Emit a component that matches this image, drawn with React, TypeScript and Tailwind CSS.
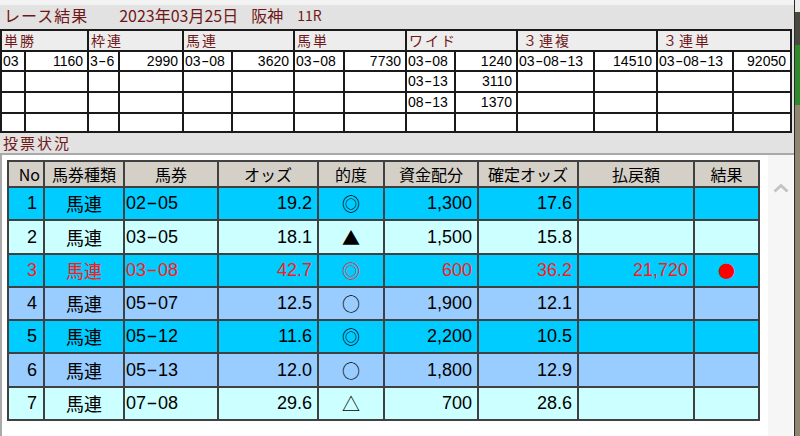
import React from 'react';

// 上段：レース結果（払戻）テーブル
const topHeaders = ['単勝', '枠連', '馬連', '馬単', 'ワイド', '３連複', '３連単'];

const topRows: string[][] = [
  ['03', '1160', '3-6', '2990', '03-08', '3620', '03-08', '7730', '03-08', '1240', '03-08-13', '14510', '03-08-13', '92050'],
  ['', '', '', '', '', '', '', '', '03-13', '3110', '', '', '', ''],
  ['', '', '', '', '', '', '', '', '08-13', '1370', '', '', '', ''],
  ['', '', '', '', '', '', '', '', '', '', '', '', '', ''],
];

const topRowHeights = ['h-[18px]', 'h-[19px]', 'h-[19px]', 'h-[17px]'];

// 下段：投票状況
type Bet = {
  no: number;
  kind: string;
  ticket: string;
  odds: string;
  mark: string;
  amount: string;
  fixed: string;
  payout: string;
  result: string;
  bg: string;
  hit?: boolean;
};

const bets: Bet[] = [
  { no: 1, kind: '馬連', ticket: '02-05', odds: '19.2', mark: '◎', amount: '1,300', fixed: '17.6', payout: '', result: '', bg: 'bg-[#00ccff]' },
  { no: 2, kind: '馬連', ticket: '03-05', odds: '18.1', mark: '▲', amount: '1,500', fixed: '15.8', payout: '', result: '', bg: 'bg-[#ccffff]' },
  { no: 3, kind: '馬連', ticket: '03-08', odds: '42.7', mark: '◎', amount: '600', fixed: '36.2', payout: '21,720', result: '●', bg: 'bg-[#00ccff]', hit: true },
  { no: 4, kind: '馬連', ticket: '05-07', odds: '12.5', mark: '○', amount: '1,900', fixed: '12.1', payout: '', result: '', bg: 'bg-[#99ccff]' },
  { no: 5, kind: '馬連', ticket: '05-12', odds: '11.6', mark: '◎', amount: '2,200', fixed: '10.5', payout: '', result: '', bg: 'bg-[#00ccff]' },
  { no: 6, kind: '馬連', ticket: '05-13', odds: '12.0', mark: '○', amount: '1,800', fixed: '12.9', payout: '', result: '', bg: 'bg-[#99ccff]' },
  { no: 7, kind: '馬連', ticket: '07-08', odds: '29.6', mark: '△', amount: '700', fixed: '28.6', payout: '', result: '', bg: 'bg-[#ccffff]' },
];

const betHeaders = ['No', '馬券種類', '馬券', 'オッズ', '的度', '資金配分', '確定オッズ', '払戻額', '結果'];

// the hyphen in the original font is a long dash, widen it a bit
const Combo = ({ text, big }: { text: string; big?: boolean }) => {
  const parts = text.split('-');
  return (
    <>
      {parts.map((p, i) => (
        <React.Fragment key={i}>
          {i > 0 && (
            <span className={big ? 'inline-block mx-[3px] scale-x-[1.9]' : 'inline-block mx-[2px] scale-x-[1.7]'}>-</span>
          )}
          {p}
        </React.Fragment>
      ))}
    </>
  );
};

const TopTable = () => (
  <div className="w-fit grid grid-cols-[22px_61px_29px_62px_47px_60px_48px_60px_47px_60px_75px_61px_74px_56px] gap-[2px] p-[2px] bg-[#1a1a1a]">
    {topHeaders.map((h) => (
      <div
        key={h}
        className="col-span-2 h-[19px] bg-[#ededed] flex items-center pl-[2px] text-[14px] tracking-[2px] text-[#701818] font-['Noto_Sans_CJK_JP',sans-serif]"
      >
        {h.startsWith('３') ? <span className="ml-[3px]">{h}</span> : h}
      </div>
    ))}
    {topRows.map((row, r) =>
      row.map((cell, c) => (
        <div
          key={`${r}-${c}`}
          className={`${topRowHeights[r]} bg-white flex items-center text-[14px] text-black font-['Liberation_Sans',sans-serif] ${
            c % 2 === 0 ? 'justify-start pl-[1px]' : 'justify-end pr-[4px]'
          }`}
        >
          {c % 2 === 0 ? <Combo text={cell} /> : cell}
        </div>
      ))
    )}
  </div>
);

const BetTable = () => (
  <div className="w-fit grid grid-cols-[34px_78px_92px_98px_64px_92px_98px_114px_63px] grid-rows-[24px_31px_32px_31px_31px_31px_32px_31px] gap-[2px] p-[2px] bg-[#404040] font-['Liberation_Sans','Noto_Sans_CJK_JP',sans-serif]">
    {betHeaders.map((h, i) => (
      <div
        key={h}
        className={`bg-[#d4d0c8] flex items-center text-[16px] text-black font-['Noto_Sans_CJK_JP',sans-serif] ${
          i === 0 ? 'justify-end pr-[3px]' : 'justify-center'
        }`}
      >
        {h}
      </div>
    ))}
    {bets.map((b) => {
      const tc = b.hit ? 'text-[#ff1a1a]' : 'text-black';
      const cell = `${b.bg} ${tc} flex items-center text-[18px]`;
      return (
        <React.Fragment key={b.no}>
          <div className={`${cell} justify-end pr-[6px]`}>{b.no}</div>
          <div className={`${cell} justify-center text-[17px] font-['Noto_Sans_CJK_JP',sans-serif]`}>{b.kind}</div>
          <div className={`${cell} justify-start pl-[1px]`}>
            <Combo text={b.ticket} big />
          </div>
          <div className={`${cell} justify-end pr-[5px]`}>{b.odds}</div>
          <div className={`${cell} justify-center text-[14px] font-['Noto_Sans_CJK_JP',sans-serif]`}>{b.mark}</div>
          <div className={`${cell} justify-end pr-[5px]`}>{b.amount}</div>
          <div className={`${cell} justify-end pr-[5px]`}>{b.fixed}</div>
          <div className={`${cell} justify-end pr-[5px]`}>{b.payout}</div>
          <div className={`${b.bg} flex items-center justify-center text-[17px] text-[#ff0000] font-['Noto_Sans_CJK_JP',sans-serif]`}>
            {b.result}
          </div>
        </React.Fragment>
      );
    })}
  </div>
);

export default function App() {
  return (
    <div className="w-[800px] h-[436px] overflow-hidden flex bg-[#e2e2e2]">
      <div className="w-[794px] flex flex-col">
        <div className="h-[5px] bg-[#f3f3f3]" />
        <div className="h-[20px] flex items-center pl-[4px] text-[16px] text-[#701818] font-['Noto_Sans_CJK_JP',sans-serif]">
          <span className="tracking-[1px]">レース結果</span>
          <span className="ml-[31px]">2023年03月25日</span>
          <span className="ml-[13px]">阪神</span>
          <span className="ml-[14px] text-[14px]">11R</span>
        </div>
        <div className="mt-[4px]">
          <TopTable />
        </div>
        <div className="h-[20px] flex items-center pl-[3px] text-[15px] tracking-[2px] text-[#701818] font-['Noto_Sans_CJK_JP',sans-serif]">
          投票状況
        </div>
        <div className="flex-1 flex border-t-2 border-l-2 border-[#a9a9a9] bg-white">
          <div className="pl-[5px] pt-[5px]">
            <BetTable />
          </div>
          <div className="ml-[8px] w-[25px] bg-[#f6f6f6] flex justify-center pt-[28px]">
            <svg width="16" height="10" viewBox="0 0 16 10">
              <polyline points="1.5,8.5 8,2.5 14.5,8.5" fill="none" stroke="#c4c4c4" strokeWidth="3" />
            </svg>
          </div>
        </div>
      </div>
      <div className="w-[6px] flex flex-col border-l border-[#2a2a2a]">
        <div className="h-[12px] bg-[#ececec]" />
        <div className="h-[33px] bg-[#4a4a40]" />
        <div className="h-[60px] bg-[#2f8a2a]" />
        <div className="flex-1 bg-[#8e8670]" />
      </div>
    </div>
  );
}
